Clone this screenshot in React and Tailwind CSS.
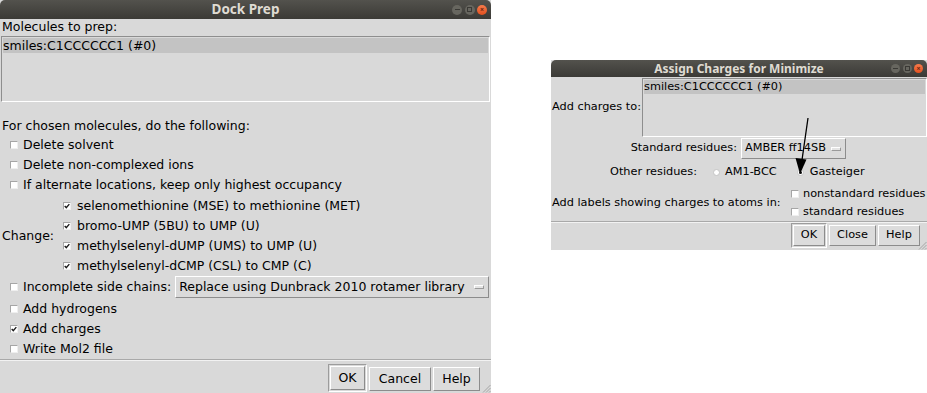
import React from "react";

function WinButtons({ size }) {
  const d = size === "sm" ? "h-[9px] w-[9px]" : "h-[10px] w-[10px]";
  return (
    <div className="absolute right-[4px] top-0 flex h-full items-center gap-[2.5px]">
      <span className={`${d} flex items-center justify-center rounded-full bg-[#67665f]`}>
        <span className="h-[1.5px] w-[5px] bg-[#3a3935]" />
      </span>
      <span className={`${d} flex items-center justify-center rounded-full bg-[#67665f]`}>
        <span className="h-[5px] w-[5px] border border-[#3a3935]" />
      </span>
      <span className={`${d} flex items-center justify-center rounded-full bg-gradient-to-b from-[#f77a4a] to-[#e2501e] text-[7px] leading-none font-bold text-[#6a2410]`}>
        ×
      </span>
    </div>
  );
}

function TitleBar({ title, tall }) {
  return (
    <div
      className={`relative flex shrink-0 items-center justify-center rounded-t-[5px] bg-gradient-to-b from-[#53524d] to-[#3b3a36] font-['Noto_Sans',sans-serif] font-bold text-[#dfdbd2] ${
        tall ? "h-[19px] text-[13.5px]" : "h-[17px] text-[12px]"
      }`}
    >
      {title}
      <WinButtons size={tall ? "lg" : "sm"} />
    </div>
  );
}

function Check({ checked }) {
  return (
    <span className="inline-flex h-[8px] w-[8px] shrink-0 items-center justify-center border border-t-[#a6a6a6] border-l-[#a6a6a6] border-b-[#efefef] border-r-[#efefef] bg-white">
      {checked && (
        <svg width="6" height="6" viewBox="0 0 6 6">
          <path d="M0.7 3 L2.3 4.6 L5.3 1.1" stroke="#1b1b1b" strokeWidth="1.4" fill="none" />
        </svg>
      )}
    </span>
  );
}

function Radio({ checked }) {
  return (
    <span className="inline-flex h-[7px] w-[7px] shrink-0 items-center justify-center rounded-full border border-[#c4c4c4] bg-white">
      {checked && <span className="h-[3px] w-[3px] rounded-full bg-[#111]" />}
    </span>
  );
}

function Row({ checked, children, extra = "" }) {
  return (
    <div className={`flex h-[20px] items-center gap-[5px] pl-[10px] ${extra}`}>
      <Check checked={checked} />
      <span>{children}</span>
    </div>
  );
}

function TkButton({ children, w, h = "h-[24px]", isDefault }) {
  const btn = (
    <div
      className={`flex items-center justify-center border border-t-white border-l-white border-b-[#8c8c8c] border-r-[#8c8c8c] bg-[#dcdcdc] ${w} ${h}`}
    >
      {children}
    </div>
  );
  if (!isDefault) return btn;
  return (
    <div className="border border-t-[#9c9c9c] border-l-[#9c9c9c] border-b-white border-r-white p-[1px]">
      {btn}
    </div>
  );
}

function MenuButton({ children, w, h }) {
  return (
    <div
      className={`flex shrink-0 items-center justify-between border border-t-white border-l-white border-b-[#8c8c8c] border-r-[#8c8c8c] bg-[#dadada] pl-[3px] pr-[4px] ${w} ${h}`}
    >
      <span>{children}</span>
      <span className="h-[4px] w-[10px] shrink-0 border border-t-white border-l-white border-b-[#9a9a9a] border-r-[#9a9a9a] bg-[#e4e4e4]" />
    </div>
  );
}

function Grip() {
  return (
    <svg className="absolute bottom-0 right-0" width="9" height="9" viewBox="0 0 9 9">
      <path d="M8.5 1 L1 8.5 M8.5 4 L4 8.5 M8.5 7 L7 8.5" stroke="#a5a5a5" strokeWidth="1" />
    </svg>
  );
}

function Listbox({ h, row = "h-[15px] leading-[15px]" }) {
  return (
    <div
      className={`border border-t-[#8e8e8e] border-l-[#8e8e8e] border-b-white border-r-white bg-[#d9d9d9] p-[1px] ${h}`}
    >
      <div className={`bg-[#c3c3c3] ${row}`}>smiles:C1CCCCCC1 (#0)</div>
    </div>
  );
}

function Separator() {
  return (
    <div className="shrink-0">
      <div className="h-px bg-[#a9a9a9]" />
      <div className="h-px bg-[#f2f2f2]" />
    </div>
  );
}

function DockPrep() {
  return (
    <div className="relative flex h-[393px] w-[491px] shrink-0 flex-col bg-[#d9d9d9] text-[12.5px]">
      <TitleBar title="Dock Prep" tall />
      <div className="flex h-[17px] items-center pl-[2px]">Molecules to prep:</div>
      <div className="mx-[1px]">
        <Listbox h="h-[66px]" />
      </div>
      <div className="mt-[16px] flex h-[16px] items-center pl-[2px]">
        For chosen molecules, do the following:
      </div>
      <Row extra="mt-[1px]">Delete solvent</Row>
      <Row>Delete non-complexed ions</Row>
      <Row>If alternate locations, keep only highest occupancy</Row>
      <div className="mt-[1px] flex">
        <div className="flex w-[63px] items-center pl-[2px]">Change:</div>
        <div className="flex flex-col">
          {[
            "selenomethionine (MSE) to methionine (MET)",
            "bromo-UMP (5BU) to UMP (U)",
            "methylselenyl-dUMP (UMS) to UMP (U)",
            "methylselenyl-dCMP (CSL) to CMP (C)",
          ].map((t) => (
            <div key={t} className="flex h-[20px] items-center gap-[6px]">
              <Check checked />
              <span>{t}</span>
            </div>
          ))}
        </div>
      </div>
      <div className="flex h-[23px] items-start pl-[10px]">
        <div className="flex h-[22px] items-center">
          <Check />
          <span className="ml-[5px] mr-[4px]">Incomplete side chains:</span>
        </div>
        <MenuButton w="w-[314px]" h="h-[22px]">
          Replace using Dunbrack 2010 rotamer library
        </MenuButton>
      </div>
      <Row>Add hydrogens</Row>
      <Row checked>Add charges</Row>
      <Row>Write Mol2 file</Row>
      <Separator />
      <div className="flex justify-end gap-[2px] pr-[11px] pt-[3px]">
        <TkButton w="w-[35px]" isDefault>
          OK
        </TkButton>
        <div className="pt-[3px]">
          <TkButton w="w-[62px]">Cancel</TkButton>
        </div>
        <div className="pt-[3px]">
          <TkButton w="w-[47px]">Help</TkButton>
        </div>
      </div>
      <Grip />
    </div>
  );
}

function AssignCharges() {
  return (
    <div className="relative ml-[60px] mt-[60px] flex h-[190px] w-[376px] shrink-0 flex-col bg-[#d9d9d9] text-[11.3px]">
      <TitleBar title="Assign Charges for Minimize" />
      <div className="flex h-[60px]">
        <div className="flex w-[91px] shrink-0 items-center pl-[1px]">Add charges to:</div>
        <div className="flex-1 pt-[1px]">
          <Listbox h="h-[59px]" row="h-[14px] leading-[14px]" />
        </div>
      </div>
      <div className="flex h-[23px] items-center">
        <div className="w-[188px] shrink-0 pr-[2px] text-right">Standard residues:</div>
        <div className="ml-[2px]">
          <MenuButton w="w-[105px]" h="h-[21px]">
            AMBER ff14SB
          </MenuButton>
        </div>
      </div>
      <div className="flex h-[25px] items-center pl-[59px]">
        <span>Other residues:</span>
        <span className="ml-[16px] flex items-center gap-[5px]">
          <Radio />
          AM1-BCC
        </span>
        <span className="ml-[20px] flex items-center gap-[6px]">
          <Radio checked />
          Gasteiger
        </span>
      </div>
      <div className="flex h-[36px]">
        <div className="flex w-[240px] shrink-0 items-center pl-[1px]">
          Add labels showing charges to atoms in:
        </div>
        <div className="flex flex-col justify-center">
          {["nonstandard residues", "standard residues"].map((t) => (
            <div key={t} className="flex h-[18px] items-center gap-[4px]">
              <Check />
              <span>{t}</span>
            </div>
          ))}
        </div>
      </div>
      <Separator />
      <div className="flex justify-end gap-[2px] pr-[7px]">
        <TkButton w="w-[32px]" h="h-[21px]" isDefault>
          OK
        </TkButton>
        <div className="pt-[2px]">
          <TkButton w="w-[47px]" h="h-[21px]">
            Close
          </TkButton>
        </div>
        <div className="pt-[2px]">
          <TkButton w="w-[42px]" h="h-[21px]">
            Help
          </TkButton>
        </div>
      </div>
      <Grip />
    </div>
  );
}

export default function App() {
  return (
    <div className="relative flex h-[393px] w-[927px] items-start overflow-hidden whitespace-nowrap bg-white font-['DejaVu_Sans',sans-serif] text-black">
      <DockPrep />
      <AssignCharges />
      <svg
        className="pointer-events-none absolute left-0 top-0"
        width="927"
        height="393"
        viewBox="0 0 927 393"
      >
        <line x1="808" y1="118" x2="802" y2="160" stroke="#000" strokeWidth="1.3" />
        <path d="M800 174 L795.5 158 L806.5 159.5 Z" fill="#000" />
      </svg>
    </div>
  );
}
